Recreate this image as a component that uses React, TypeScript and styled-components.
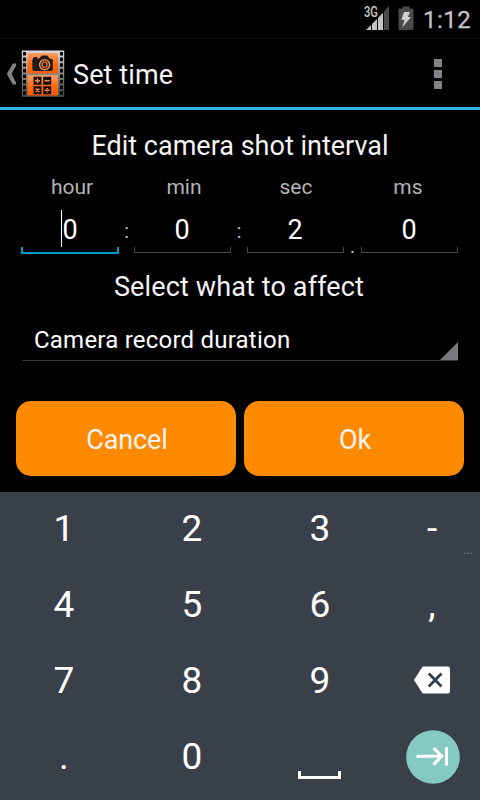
import React from "react";
import styled, { createGlobalStyle } from "styled-components";

const GlobalStyle = createGlobalStyle`
  * { box-sizing: border-box; }
  body { margin: 0; background: #000; font-family: Roboto, "Noto Sans", sans-serif; }
`;

const Screen = styled.main`
  width: 480px;
  height: 800px;
  display: flex;
  flex-direction: column;
  background: #000;
  color: #f3f3f3;
  overflow: hidden;
  white-space: nowrap;
`;

const StatusBar = styled.header`
  height: 38px;
  flex: none;
  display: flex;
  justify-content: flex-end;
  padding-right: 8px;
`;

const Clock = styled.time`
  font-size: 24px;
  font-weight: 400;
  line-height: 40px;
  letter-spacing: 0.5px;
  color: #c4c4c4;
  -webkit-text-stroke: 0.3px #bebebe;
  margin-left: 9px;
  width: 49px;
`;

const ActionBar = styled.nav`
  height: 72px;
  flex: none;
  display: flex;
  align-items: center;
  border-top: 1px solid #0d0d0d;
  border-bottom: 3px solid #33b5e5;
  padding: 2px 38px 0 6px;
`;

const Title = styled.h1`
  margin: 0 auto 0 8px;
  font-size: 27px;
  font-weight: 400;
  line-height: 36px;
  letter-spacing: 0.1px;
  padding-top: 1px;
`;

const Form = styled.section`
  height: 382px;
  flex: none;
  padding: 18px 16px 0;
  display: flex;
  flex-direction: column;
`;

const Heading = styled.h2`
  margin: 0;
  font-size: 27px;
  font-weight: 400;
  line-height: 36px;
  text-align: center;
`;

const Labels = styled.div`
  display: grid;
  grid-template-columns: repeat(4, 112px);
  margin-top: 9px;
  font-size: 21px;
  line-height: 28px;
  text-align: center;
  color: #b4b4b4;
`;

const Fields = styled.div`
  display: flex;
  height: 53px;
  margin-left: 5px;
`;

const Field = styled.div<{ $active?: boolean }>`
  width: ${(p) => (p.$active ? 98 : 97)}px;
  height: 53px;
  display: flex;
  flex-direction: column;
  align-items: center;
  justify-content: space-between;
  font-size: 27px;
  color: #fff;
`;

const Value = styled.span<{ $active?: boolean }>`
  height: 46px;
  padding-top: 11px;
  line-height: 36px;
  display: flex;
  align-items: center;
  ${(p) => (p.$active ? "margin-left: 1px;" : "margin-right: 1px;")}
`;

const Caret = styled.i`
  width: 1px;
  height: 37px;
  margin: -3px 0 0 -2px;
  background: #fff;
  box-shadow: 0 0 1px #777;
`;

const Bracket = styled.span<{ $active?: boolean }>`
  width: 100%;
  height: ${(p) => (p.$active ? 7 : 6)}px;
  margin-bottom: ${(p) => (p.$active ? 0 : 1)}px;
  border: ${(p) => (p.$active ? "2px solid #0099cc" : "1px solid #484848")};
  border-top: 0;
`;

const Separator = styled.span<{ $width: number; $low?: boolean }>`
  width: ${(p) => p.$width}px;
  padding-top: ${(p) => (p.$low ? 31 : 16)}px;
  font-size: 21px;
  line-height: 28px;
  text-align: center;
  color: #b4b4b4;
`;

const AffectHeading = styled(Heading)`
  margin-top: 15px;
  padding-right: 2px;
  letter-spacing: 0.13px;
`;

const Spinner = styled.div`
  height: 48px;
  margin: 8px 6px 0;
  padding-left: 12px;
  display: flex;
  align-items: flex-end;
  justify-content: space-between;
  border-bottom: 1px solid #3a3a3a;
  font-size: 24px;
  line-height: 39px;
  letter-spacing: 0.22px;
  color: #fff;
`;

const Triangle = styled.i`
  width: 18px;
  height: 18px;
  background: #7b7a7d;
  clip-path: polygon(100% 0, 100% 100%, 0 100%);
`;

const Actions = styled.div`
  display: grid;
  grid-template-columns: 220px 220px;
  gap: 8px;
  margin-top: 40px;
`;

const Button = styled.button`
  height: 75px;
  border: 0;
  border-radius: 15px;
  padding: 3px 0 0 2px;
  background: #ff8a00;
  color: #f3f3f3;
  font: 400 27px/36px Roboto, sans-serif;
  letter-spacing: -0.1px;
`;

const Keyboard = styled.section`
  flex: 1;
  display: grid;
  grid-template-columns: 128px 128px 128px 96px;
  grid-template-rows: repeat(4, 76px);
  background: #3a4049;
`;

const Key = styled.div`
  position: relative;
  display: flex;
  align-items: center;
  justify-content: center;
  font-size: 37px;
  line-height: 76px;
  height: 74px;
  color: #fff;
`;

const MoreHint = styled.span`
  position: absolute;
  right: 7px;
  bottom: 10px;
  font-size: 12px;
  line-height: 12px;
  color: #7c8188;
`;

const SignalIcon = () => (
  <svg width="28" height="38" viewBox="0 0 28 38" fontFamily="Roboto" fontWeight="500">
    <path d="M2 30L7 25V30ZM8 24L13 19V30H8ZM14 18L19 12.7V30H14Z" fill="#c4c4c4" />
    <path d="M20 11.5L25 6V30H20Z" fill="#4a4c49" />
    <text x="0" y="17" fontSize="14" textLength="14" lengthAdjust="spacingAndGlyphs" fill="#c8c8c8" stroke="#000" strokeWidth="1" paintOrder="stroke">3G</text>
  </svg>
);

const BatteryIcon = () => (
  <svg width="16" height="38" viewBox="0 0 16 38" style={{ marginLeft: 6 }}>
    <path d="M4.5 6.5H11.5V8.5H14.5Q15.5 8.5 15.5 9.5V29Q15.5 30 14.5 30H1.5Q.5 30 .5 29V9.5Q.5 8.5 1.5 8.5H4.5Z" fill="#484b48" />
    <path d="M6 12H12L9.8 17H13L4.2 27.5L6.6 19.8H3.3Z" fill="#d0d0d0" />
  </svg>
);

const BackIcon = () => (
  <svg width="11" height="24" viewBox="0 0 11 24">
    <path d="M10 1.5H6.8L.8 12L6.8 22.5H10V20.2L5.5 12L10 3.8Z" fill="#828282" />
  </svg>
);

const perforations = Array.from({ length: 8 }, (_, i) => 2 + i * 5.6);

const AppIcon = () => (
  <svg width="44" height="48" viewBox="0 0 44 48" style={{ marginLeft: 4 }}>
    <defs>
      <linearGradient id="frame" x1="0" y1="0" x2="0" y2="1">
        <stop stopColor="#dedbe0" />
        <stop offset=".5" stopColor="#88898a" />
        <stop offset="1" stopColor="#3d4140" />
      </linearGradient>
      <linearGradient id="cell" x1="0" y1="0" x2="0" y2="1">
        <stop stopColor="#ffa16a" />
        <stop offset=".5" stopColor="#ff6c12" />
        <stop offset="1" stopColor="#ff5c00" />
      </linearGradient>
    </defs>
    <path d="M.8 .5H43.2V47H.8Z" fill="url(#frame)" />
    {perforations.map((y) => (
      <path key={y} d={`M2 ${y}h3v3.6h-3zM39 ${y}h3v3.6h-3z`} fill="#070707" />
    ))}
    <path d="M6.5 3H37V23.5H6.5Z" fill="url(#cell)" />
    <path d="M6.5 25.2H37V45.5H6.5Z" fill="url(#cell)" />
    <path d="M12.3 8L13.3 7H16.3V8.7L18.3 8.5L20.8 5.6H26.3L28.8 8.7H30.3Q31.8 9 31.8 10V19Q31.8 20.9 29.8 20.9H13.3Q11.3 20.9 11.3 18.5V10.5Q11.3 9 12.3 8Z" fill="#201c1b" />
    <circle cx="23.6" cy="14.7" r="5" fill="#211b18" stroke="#ed8b4c" strokeWidth="1.5" />
    <circle cx="23.6" cy="14.7" r="2.5" fill="#17120f" stroke="#f27a31" strokeWidth="1.2" />
    <path d="M12.5 26.8h8v8h-8zM22.2 26.8h8v8h-8zM12.5 36.2h8v8h-8zM22.2 36.2h8v8h-8z" fill="#15100d" />
    <path d="M14 30.8h5M16.5 28.3v5M23.7 30.8h5M14.7 38.4l3.6 3.6M18.3 38.4l-3.6 3.6M23.7 40.2h5M26.2 37.9v1M26.2 41.5v1" fill="none" stroke="#ff8740" strokeWidth="1.4" />
  </svg>
);

const OverflowIcon = () => (
  <svg width="8" height="30" viewBox="0 0 8 30">
    <path d="M0 0h8v8H0zM0 11h8v8H0zM0 22h8v8H0z" fill="#858387" />
  </svg>
);

const DeleteIcon = () => (
  <svg width="36" height="28" viewBox="0 0 36 28" style={{ marginTop: -2 }}>
    <path d="M9.5.4H33.5Q36 .4 36 2.9V25.1Q36 27.6 33.5 27.6H9.5Q8.7 27.6 8 26.6L0 14L8 1.4Q8.7.4 9.5.4Z" fill="#fff" />
    <path d="M14.8 7.6L27.5 20.4M27.5 7.6L14.8 20.4" stroke="#3a4049" strokeWidth="2.8" />
  </svg>
);

const SpaceIcon = () => (
  <svg width="43" height="8" viewBox="0 0 43 8" style={{ margin: "35px 1px 0 0" }}>
    <path d="M1.5 0V6.5H41.5V0" fill="none" stroke="#fff" strokeWidth="3" />
  </svg>
);

const NextIcon = () => (
  <svg width="54" height="54" viewBox="0 0 54 54" style={{ margin: "-1px 0 0 2px" }}>
    <circle cx="27" cy="27" r="26.8" fill="#84cac3" />
    <path d="M10.5 26.3H35.5M27.5 18L35.8 26.3L27.5 34.6M40.5 17V35.5" fill="none" stroke="#fff" strokeWidth="3" />
  </svg>
);

export default function App() {
  return (
    <>
      <GlobalStyle />
      <Screen>
        <StatusBar>
          <SignalIcon />
          <BatteryIcon />
          <Clock>1:12</Clock>
        </StatusBar>
        <ActionBar>
          <BackIcon />
          <AppIcon />
          <Title>Set time</Title>
          <OverflowIcon />
        </ActionBar>
        <Form>
          <Heading>Edit camera shot interval</Heading>
          <Labels>
            <span>hour</span>
            <span>min</span>
            <span>sec</span>
            <span>ms</span>
          </Labels>
          <Fields>
            <Field $active>
              <Value $active><Caret />0</Value>
              <Bracket $active />
            </Field>
            <Separator $width={15}>:</Separator>
            <Field><Value>0</Value><Bracket /></Field>
            <Separator $width={16}>:</Separator>
            <Field><Value>2</Value><Bracket /></Field>
            <Separator $width={17} $low>.</Separator>
            <Field><Value>0</Value><Bracket /></Field>
          </Fields>
          <AffectHeading>Select what to affect</AffectHeading>
          <Spinner>
            <span>Camera record duration</span>
            <Triangle />
          </Spinner>
          <Actions>
            <Button>Cancel</Button>
            <Button>Ok</Button>
          </Actions>
        </Form>
        <Keyboard>
          <Key>1</Key>
          <Key>2</Key>
          <Key>3</Key>
          <Key>-<MoreHint>...</MoreHint></Key>
          <Key>4</Key>
          <Key>5</Key>
          <Key>6</Key>
          <Key>,</Key>
          <Key>7</Key>
          <Key>8</Key>
          <Key>9</Key>
          <Key><DeleteIcon /></Key>
          <Key>.</Key>
          <Key>0</Key>
          <Key><SpaceIcon /></Key>
          <Key><NextIcon /></Key>
        </Keyboard>
      </Screen>
    </>
  );
}
